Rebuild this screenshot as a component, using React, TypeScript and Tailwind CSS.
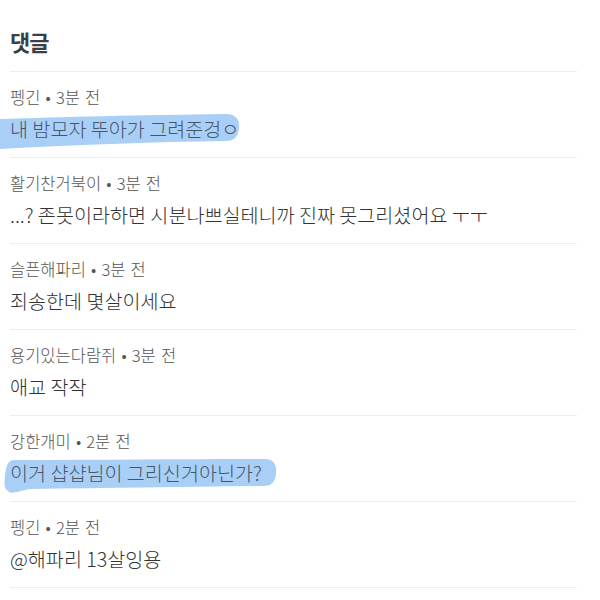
import React from "react";

type Item = { name: string; time: string; body: string; hl?: 1 | 2 };

const items: Item[] = [
  { name: "펭긴", time: "3분 전", body: "내 밤모자 뚜아가 그려준겅ㅇ", hl: 1 },
  { name: "활기찬거북이", time: "3분 전", body: "...? 존못이라하면 시분나쁘실테니까 진짜 못그리셨어요 ㅜㅜ" },
  { name: "슬픈해파리", time: "3분 전", body: "죄송한데 몇살이세요" },
  { name: "용기있는다람쥐", time: "3분 전", body: "애교 작작" },
  { name: "강한개미", time: "2분 전", body: "이거 샵샵님이 그리신거아닌가?", hl: 2 },
  { name: "펭긴", time: "2분 전", body: "@해파리 13살잉용" },
];

function Highlight({ kind }: { kind: 1 | 2 }) {
  return (
    <svg
      className="absolute left-[-10px] top-0 pointer-events-none"
      width="300"
      height="85"
      viewBox="0 0 300 85"
    >
      {kind === 1 ? (
        <path
          d="M0,47 C60,45 140,43 226,42 C236,42 240,48 239,56 C238,65 234,69 226,69 C150,70 70,73 0,77 Z"
          fill="#a9cff6"
        />
      ) : (
        <path
          d="M14,44 C100,44 190,43 266,43 C274,43 277,50 276,58 C275,66 272,70 264,70 C190,71 110,72 30,73 C20,75 12,78 9,76 C4,73 4,68 5,60 C6,50 8,44 14,44 Z"
          fill="#a9cff6"
        />
      )}
    </svg>
  );
}

export default function App() {
  return (
    <div
      className="w-[600px] h-[600px] bg-white pl-[10px] pr-[23px] overflow-hidden"
      style={{ fontFamily: '"Noto Sans CJK KR", "Noto Sans", sans-serif' }}
    >
      <div className="h-[71px] flex items-center">
        <h1 className="text-[22px] leading-none font-bold text-[#3a3f47] tracking-[-1px] mt-[10px]">
          댓글
        </h1>
      </div>
      <div className="border-b border-[#eeeeee]">
        {items.map((it, i) => (
          <div key={i} className="relative border-t border-[#eeeeee] pt-[15px] pb-[15px] h-[86px]">
            {it.hl && <Highlight kind={it.hl} />}
            <div className="relative text-[16.5px] leading-[20px] font-light text-[#555555] [word-spacing:1.5px]">
              {it.name} • {it.time}
            </div>
            <div
              className={
                "relative mt-[9px] text-[19.6px] leading-[26px] font-light " +
                (it.hl ? "text-[#46556a]" : "text-[#333333]")
              }
            >
              {it.body}
            </div>
          </div>
        ))}
      </div>
    </div>
  );
}
